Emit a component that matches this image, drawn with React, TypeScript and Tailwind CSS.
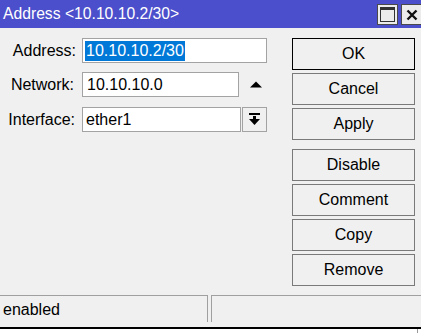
import React from "react";

function Btn({ label, primary }: { label: string; primary?: boolean }) {
  return (
    <div
      className={`h-[32px] flex items-center justify-center border bg-[#f0f0f0] text-black ${
        primary ? "border-black" : "border-[#7a7a7a]"
      }`}
    >
      {label}
    </div>
  );
}

export default function App() {
  return (
    <div className="w-[421px] h-[333px] bg-[#f0f0f0] flex flex-col overflow-hidden font-['Liberation_Sans',Arial,sans-serif] text-[16px] leading-[20px] text-black">
      {/* Title bar */}
      <div className="h-[28px] bg-[#4b4fcb] flex items-center shrink-0">
        <div className="pl-[3px] text-white text-[15.7px] flex-1 whitespace-nowrap">
          Address &lt;10.10.10.2/30&gt;
        </div>
        <div className="flex items-center gap-[3px] self-start mt-[4px]">
          <div className="w-[21px] h-[21px] bg-[#ececec] border border-[#4a4a4a] flex items-center justify-center">
            <div className="w-[15px] h-[15px] border border-[#333] border-t-[3px]" />
          </div>
          <div className="w-[20px] h-[21px] bg-[#ececec] border border-[#4a4a4a] border-r-0 flex items-center justify-center">
            <svg width="12" height="12" viewBox="0 0 12 12">
              <path d="M1.5 1.5 L10.5 10.5 M10.5 1.5 L1.5 10.5" stroke="#111" strokeWidth="2.4" />
            </svg>
          </div>
        </div>
      </div>

      {/* Main */}
      <div className="flex-1 flex">
        <div className="w-[292px] pt-[10px] flex flex-col">
          <div className="flex items-center h-[25px]">
            <div className="w-[77px] text-right pr-[1px]">Address:</div>
            <div className="ml-[5px] w-[185px] h-[25px] bg-white border border-[#a3a3a3] flex items-center pl-[2px]">
              <span className="bg-[#0078d7] text-white px-[1px]">10.10.10.2/30</span>
            </div>
          </div>
          <div className="flex items-center h-[25px] mt-[9px]">
            <div className="w-[77px] text-right pr-[3px]">Network:</div>
            <div className="ml-[5px] w-[157px] h-[25px] bg-white border border-[#a3a3a3] flex items-center pl-[4px]">
              10.10.10.0
            </div>
            <div className="w-[33px] flex items-center justify-center">
              <svg width="12" height="7" viewBox="0 0 12 7">
                <polygon points="0,6.5 12,6.5 6,0.5" fill="#000" />
              </svg>
            </div>
          </div>
          <div className="flex items-center h-[25px] mt-[10px]">
            <div className="w-[77px] text-right pr-[2px]">Interface:</div>
            <div className="ml-[5px] w-[159px] h-[25px] bg-white border border-[#a3a3a3] flex items-center pl-[3px]">
              ether1
            </div>
            <div className="ml-[1px] w-[25px] h-[25px] bg-[#f0f0f0] border border-[#a3a3a3] flex items-center justify-center">
              <svg width="11" height="13" viewBox="0 0 11 13">
                <rect x="0" y="0" width="11" height="2" fill="#000" />
                <rect x="4" y="3" width="3" height="4" fill="#000" />
                <polygon points="0,6 11,6 5.5,12" fill="#000" />
              </svg>
            </div>
          </div>
        </div>
        <div className="w-[123px] pt-[10px] flex flex-col">
          <div className="flex flex-col gap-[3px]">
            <Btn label="OK" primary />
            <Btn label="Cancel" />
            <Btn label="Apply" />
          </div>
          <div className="flex flex-col gap-[3px] mt-[9px]">
            <Btn label="Disable" />
            <Btn label="Comment" />
            <Btn label="Copy" />
            <Btn label="Remove" />
          </div>
        </div>
      </div>

      {/* Status bar */}
      <div className="h-[27px] flex shrink-0">
        <div className="w-[208px] border-t border-r border-[#a0a0a0] flex items-center pl-[3px] pt-[1px]">
          enabled
        </div>
        <div className="ml-[3px] flex-1 border-t border-l border-[#a0a0a0]" />
      </div>
      <div className="h-[5px] shrink-0" />
      <div className="h-[6px] shrink-0 bg-white border-t-2 border-black flex justify-end">
        <div className="w-[1px] h-full bg-[#999] mr-[3px]" />
      </div>
    </div>
  );
}
